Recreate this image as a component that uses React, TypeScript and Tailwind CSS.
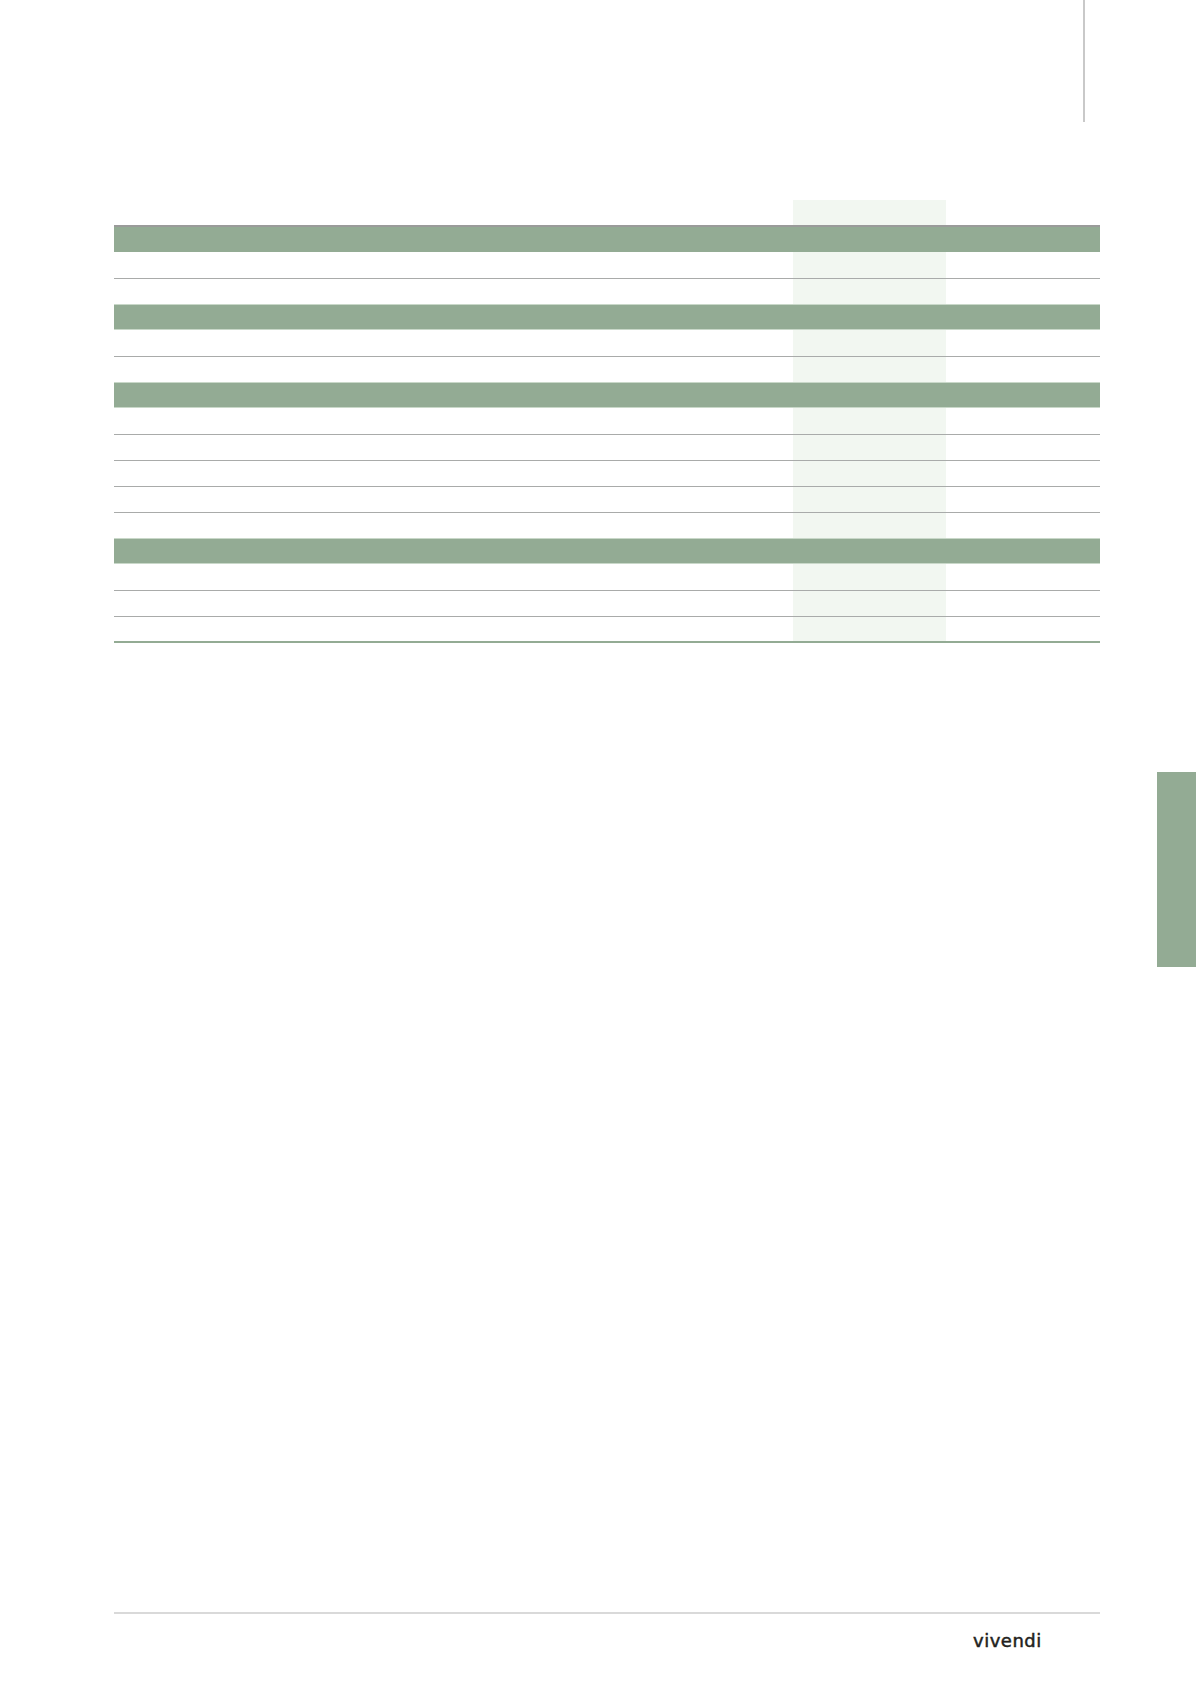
import React from 'react';

// Row kinds for the blank ruled table
type Row = 'band' | 'data' | 'last' | 'spacer';

const ROWS: Row[] = [
  'band', 'data', 'spacer',
  'band', 'data', 'spacer',
  'band', 'data', 'data', 'data', 'data', 'spacer',
  'band', 'data', 'data', 'last',
];

const Cells: React.FC = () => (
  <div className="flex h-full">
    <div className="w-[679px]" />
    <div className="w-[153px] bg-[#f2f7f1]" />
    <div className="flex-1" />
  </div>
);

const TableRow: React.FC<{ kind: Row; index: number; afterBand: boolean }> = ({ kind, index, afterBand }) => {
  if (kind === 'band') {
    return (
      <div
        className={`bg-[#93ab94] ${
          index === 0 ? 'h-[27px] border-t-2 border-[#9a9b9a]' : 'h-[26px] border-y border-[#c9d8c9]'
        }`}
      />
    );
  }
  if (kind === 'spacer') {
    return (
      <div className="h-[25px]">
        <Cells />
      </div>
    );
  }
  return (
    <div
      className={`${afterBand ? 'h-[27px]' : 'h-[26px]'} ${
        kind === 'last' ? 'border-b-2 border-[#93ab94]' : 'border-b border-[#a9abaa]'
      }`}
    >
      <Cells />
    </div>
  );
};

export default function App() {
  return (
    <div className="w-[1196px] h-[1692px] bg-white flex flex-col" style={{ fontFamily: '"DejaVu Sans", sans-serif' }}>
      {/* top margin rule */}
      <div className="h-[122px] pl-[1083px]">
        <div className="w-[2px] h-full bg-[#c9c9c9]" />
      </div>

      {/* table */}
      <div className="mt-[78px] ml-[114px] w-[986px]">
        <div className="h-[25px]">
          <Cells />
        </div>
        {ROWS.map((kind, i) => (
          <TableRow key={i} kind={kind} index={i} afterBand={i > 0 && ROWS[i - 1] === 'band'} />
        ))}
      </div>

      {/* section tab on the page edge */}
      <div className="mt-[129px] flex justify-end">
        <div className="w-[39px] h-[195px] bg-[#93ab94]" />
      </div>

      {/* footer */}
      <div className="mt-[645px] ml-[114px] w-[986px] h-[2px] bg-[#d9d9d9]" />
      <div className="mt-[15px] ml-[973px]">
        <span className="text-[18px] leading-[24px] text-[#231f20] tracking-[0.5px] [-webkit-text-stroke:0.5px_#231f20]">
          vivendi
        </span>
      </div>
    </div>
  );
}
